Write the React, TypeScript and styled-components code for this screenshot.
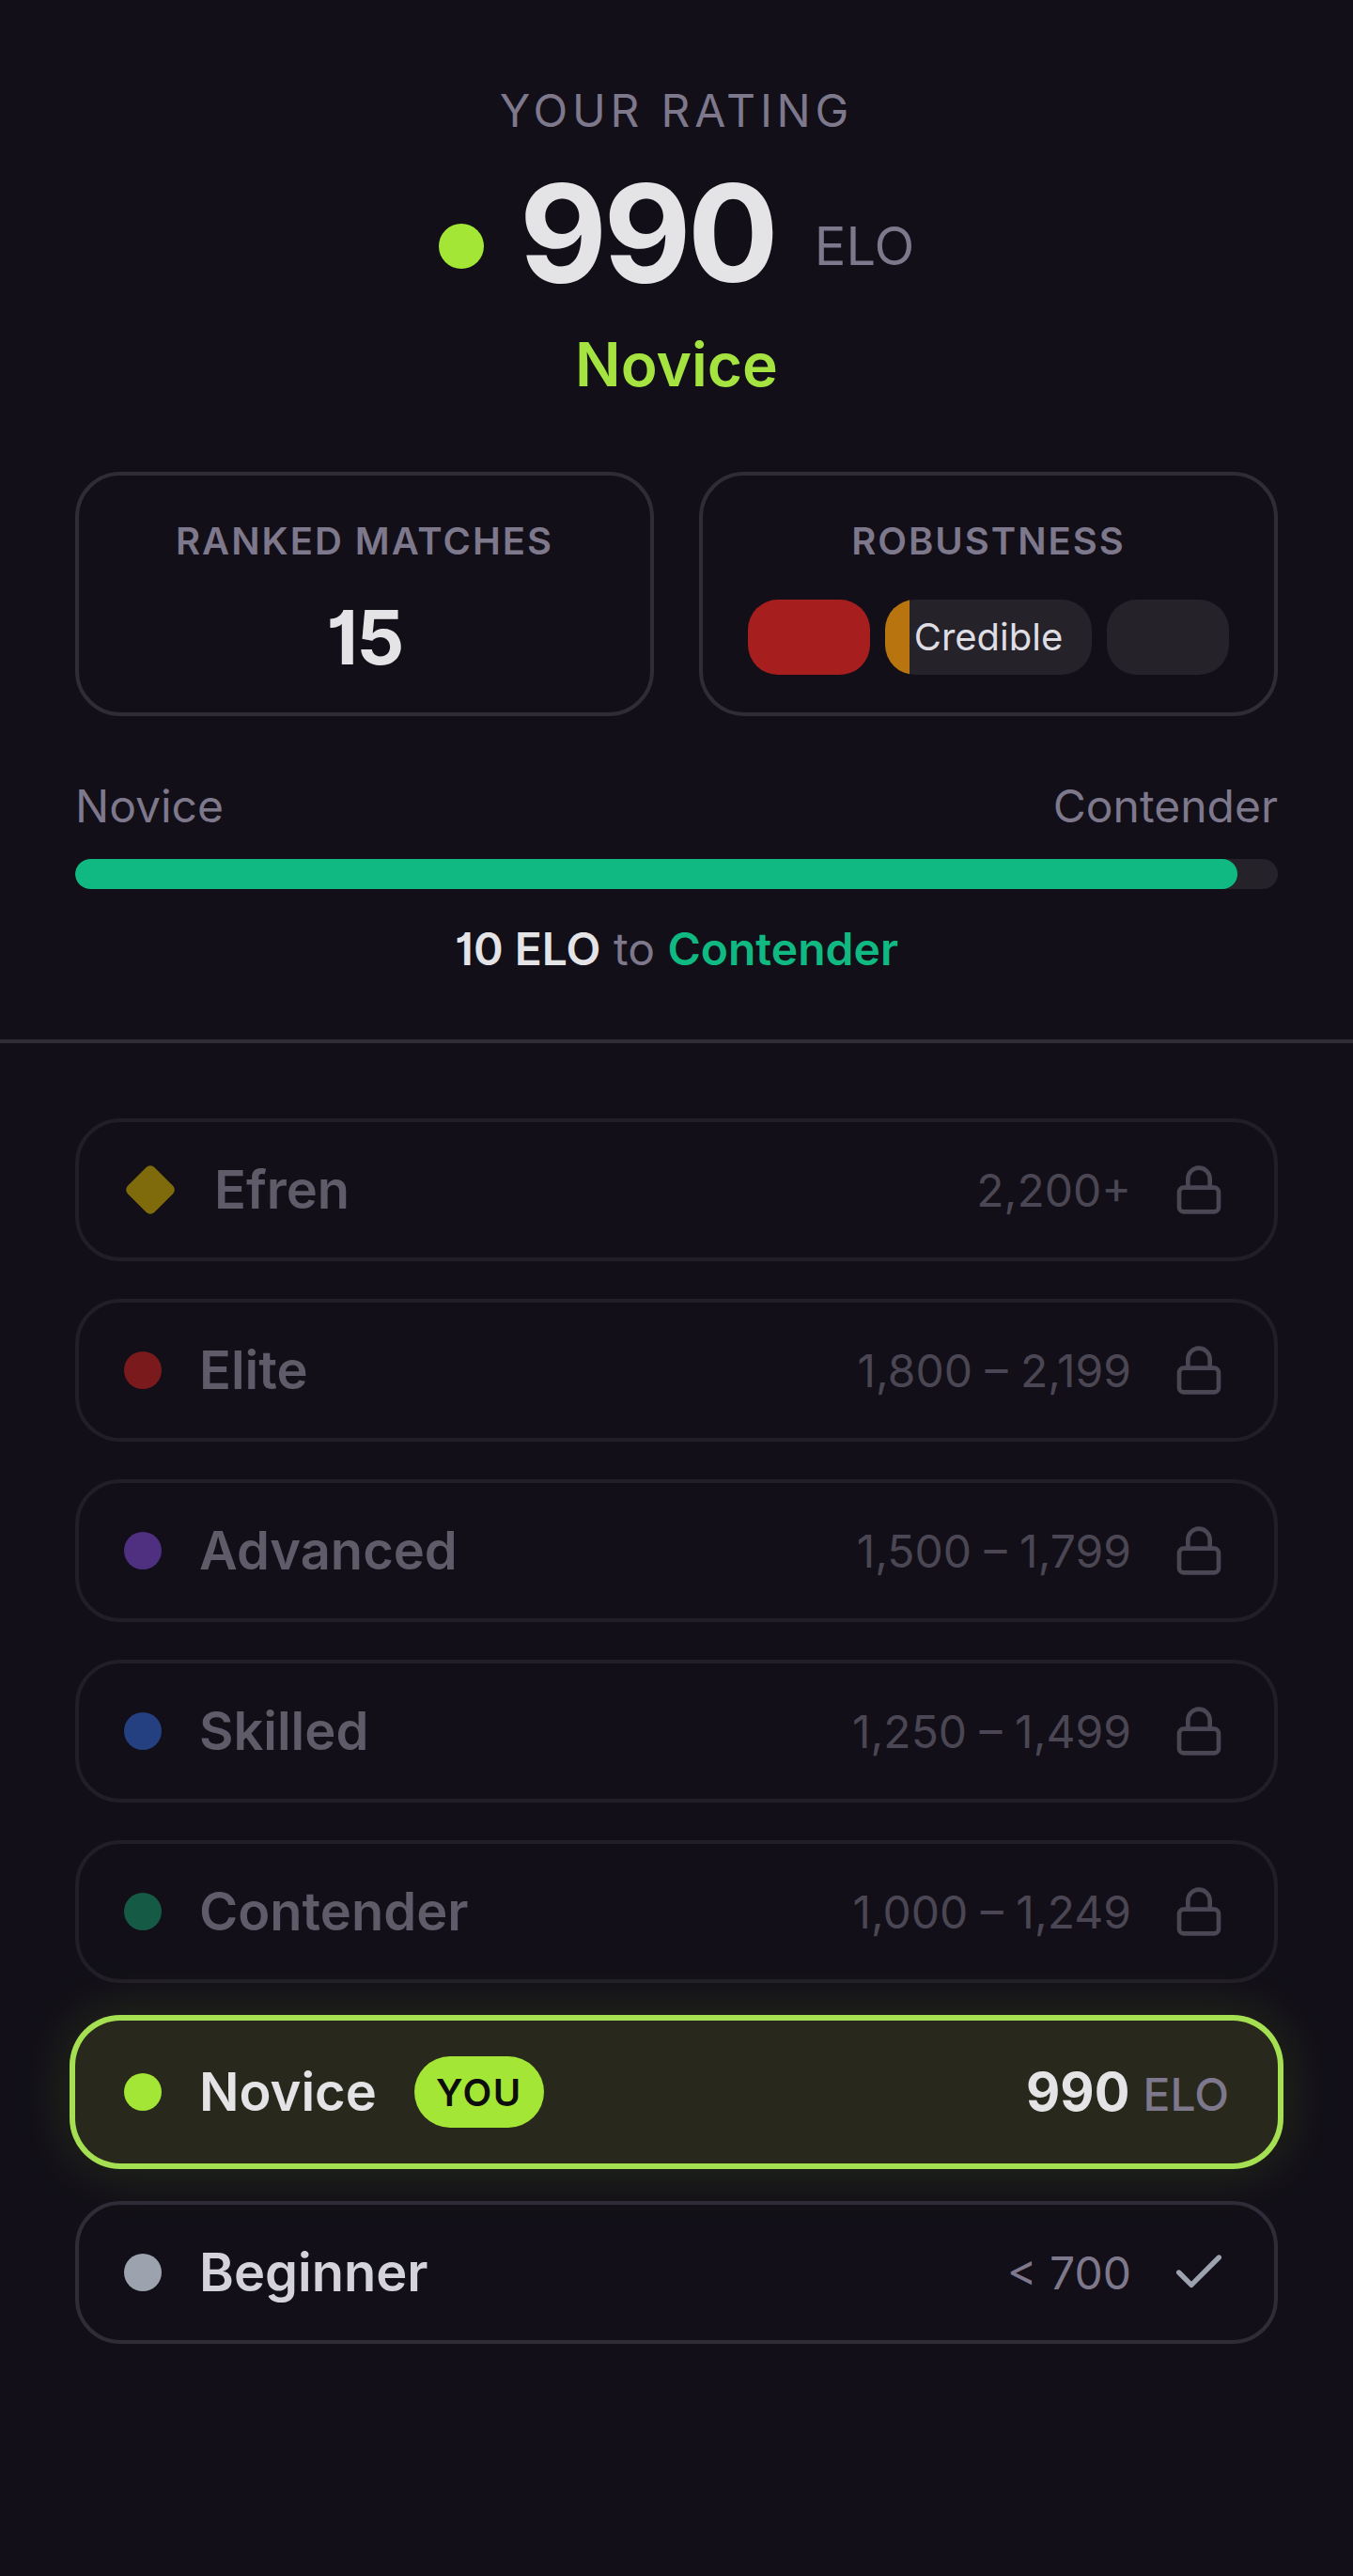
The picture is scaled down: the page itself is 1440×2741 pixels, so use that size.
import { createGlobalStyle, styled } from 'styled-components';
import { Check, Lock } from 'lucide-react';

const GlobalStyle = createGlobalStyle`
  * { box-sizing: border-box; }
  html, body { margin: 0; background: #120f18; }
  body { font-family: Inter, "Liberation Sans", sans-serif; color: #e4e4e7; }
`;

const Page = styled.div`
  min-height: 2741px;
  background: #120f18;
`;

const Summary = styled.section`
  padding: 86px 80px 0;
`;

const Eyebrow = styled.div`
  font-size: 48px;
  line-height: 64px;
  letter-spacing: 4.8px;
  color: #7e788c;
  text-align: center;
`;

const RatingRow = styled.div`
  display: flex;
  align-items: center;
  justify-content: center;
  margin-top: 40px;
  height: 144px;
`;

const RatingDot = styled.span`
  width: 48px;
  height: 48px;
  border-radius: 50%;
  background: #a3e635;
  margin-right: 38px;
`;

const RatingValue = styled.span`
  margin-right: 42px;
  margin-bottom: 28px;
  font-size: 144px;
  line-height: 1;
  font-weight: 700;
  letter-spacing: -4px;
`;

const RatingUnit = styled.span`
  font-size: 56px;
  color: #7e788c;
`;

const TierName = styled.div`
  margin-top: 14px;
  font-size: 64px;
  line-height: 80px;
  font-weight: 600;
  color: #a4e340;
  text-align: center;
`;

const Stats = styled.div`
  display: grid;
  grid-template-columns: 1fr 1fr;
  gap: 48px;
  margin-top: 74px;
`;

const StatCard = styled.div`
  height: 260px;
  padding: 42px 48px 40px;
  border: 4px solid #2f2b37;
  border-radius: 48px;
  text-align: center;
`;

const StatLabel = styled.div`
  font-size: 40px;
  line-height: 56px;
  font-weight: 600;
  letter-spacing: 2px;
  color: #7e788c;
  margin-bottom: 34px;
`;

const StatValue = styled.div`
  font-size: 80px;
  line-height: 80px;
  font-weight: 700;
  letter-spacing: -1.6px;
  font-feature-settings: 'cv01';
`;

const Pills = styled.div`
  display: flex;
  gap: 16px;
`;

const Pill = styled.div<{ $tone: string; $wide?: boolean }>`
  position: relative;
  overflow: hidden;
  flex: ${p => (p.$wide ? '0 0 220px' : '0 0 130px')};
  height: 80px;
  border-radius: 32px;
  background: ${p => p.$tone};
  font-size: 40px;
  line-height: 80px;
  color: #dedde3;
`;

const PillFill = styled.span`
  position: absolute;
  left: 0;
  top: 0;
  bottom: 0;
  background: #b8740f;
`;

const PillText = styled.span`
  position: relative;
`;

const Progress = styled.div`
  margin-top: 64px;
`;

const ProgressLabels = styled.div`
  display: flex;
  justify-content: space-between;
  font-size: 48px;
  line-height: 64px;
  color: #7e788c;
`;

const Track = styled.div`
  height: 32px;
  margin-top: 24px;
  border-radius: 16px;
  background: #25222a;
  overflow: hidden;
`;

const TrackFill = styled.div`
  height: 100%;
  border-radius: 16px;
  background: #10b981;
`;

const Remaining = styled.div`
  margin-top: 32px;
  font-size: 48px;
  line-height: 64px;
  text-align: center;
  color: #7e788c;

  strong {
    font-weight: 600;
    color: #e4e4e7;
    font-feature-settings: 'cv01';
  }

  em {
    font-style: normal;
    font-weight: 600;
    color: #10b981;
  }
`;

const Divider = styled.hr`
  margin: 64px 0 0;
  border: 0;
  height: 4px;
  background: #2f2b37;
`;

const TierList = styled.div`
  display: flex;
  flex-direction: column;
  gap: 40px;
  padding: 80px 80px 0;
`;

const Row = styled.div<{ $state: 'locked' | 'current' | 'passed' }>`
  display: flex;
  align-items: center;
  height: 152px;
  padding: 0 48px;
  border-radius: 48px;
  border: 4px solid ${p => (p.$state === 'locked' ? '#211e28' : p.$state === 'passed' ? '#2f2b37' : 'transparent')};
  ${p =>
    p.$state === 'current' &&
    `
    background: #28291c;
    box-shadow: 0 0 0 6px #a5e052, 0 0 64px 8px rgba(163, 230, 53, 0.14);
  `}
`;

const Dot = styled.span<{ $color: string }>`
  flex: none;
  width: 40px;
  height: 40px;
  border-radius: 50%;
  background: ${p => p.$color};
`;

const DiamondBox = styled.span`
  flex: none;
  display: flex;
  align-items: center;
  justify-content: center;
  width: 56px;
  height: 56px;
`;

const Diamond = styled.span<{ $color: string }>`
  width: 40px;
  height: 40px;
  border-radius: 6px;
  background: ${p => p.$color};
  transform: rotate(45deg);
`;

const TierTitle = styled.span<{ $color: string }>`
  margin-left: 40px;
  font-size: 56px;
  line-height: 72px;
  font-weight: 600;
  color: ${p => p.$color};
`;

const YouBadge = styled.span`
  display: flex;
  align-items: center;
  justify-content: center;
  height: 76px;
  width: 138px;
  margin-left: 40px;
  border-radius: 38px;
  background: #a3e635;
  color: #0d0d0d;
  font-size: 40px;
  font-weight: 600;
  letter-spacing: 1.6px;
`;

const Range = styled.span<{ $color: string }>`
  margin-left: auto;
  font-size: 48px;
  color: ${p => p.$color};
`;

const RowIcon = styled.span<{ $color: string }>`
  flex: none;
  display: flex;
  align-items: center;
  justify-content: center;
  width: 64px;
  margin-left: 40px;
  color: ${p => p.$color};
`;

const CurrentElo = styled.span`
  margin-left: auto;
  font-size: 56px;
  font-weight: 700;
  color: #e4e4e7;

  small {
    margin-left: 14px;
    font-size: 48px;
    font-weight: 500;
    color: #7e788c;
  }
`;

const lockedTiers = [
  { name: 'Elite', range: '1,800 – 2,199', color: '#7b1a1c' },
  { name: 'Advanced', range: '1,500 – 1,799', color: '#4f3080' },
  { name: 'Skilled', range: '1,250 – 1,499', color: '#244080' },
  { name: 'Contender', range: '1,000 – 1,249', color: '#155a45' },
];

export default function App() {
  return (
    <Page>
      <GlobalStyle />
      <Summary>
        <Eyebrow>YOUR RATING</Eyebrow>
        <RatingRow>
          <RatingDot />
          <RatingValue>990</RatingValue>
          <RatingUnit>ELO</RatingUnit>
        </RatingRow>
        <TierName>Novice</TierName>

        <Stats>
          <StatCard>
            <StatLabel>RANKED MATCHES</StatLabel>
            <StatValue>15</StatValue>
          </StatCard>
          <StatCard>
            <StatLabel>ROBUSTNESS</StatLabel>
            <Pills>
              <Pill $tone="#a61e1e" />
              <Pill $tone="#25222a" $wide>
                <PillFill style={{ width: '26px' }} />
                <PillText>Credible</PillText>
              </Pill>
              <Pill $tone="#25222a" />
            </Pills>
          </StatCard>
        </Stats>

        <Progress>
          <ProgressLabels>
            <span>Novice</span>
            <span>Contender</span>
          </ProgressLabels>
          <Track>
            <TrackFill style={{ width: `${((990 - 700) / 300) * 100}%` }} />
          </Track>
          <Remaining>
            <strong>10 ELO</strong> to <em>Contender</em>
          </Remaining>
        </Progress>
      </Summary>

      <Divider />

      <TierList>
        <Row $state="locked">
          <DiamondBox>
            <Diamond $color="#7f6a0c" />
          </DiamondBox>
          <TierTitle $color="#5f5b69">Efren</TierTitle>
          <Range $color="#4a4653">2,200+</Range>
          <RowIcon $color="#4a4653">
            <Lock size={56} strokeWidth={2} />
          </RowIcon>
        </Row>
        {lockedTiers.map(t => (
          <Row $state="locked" key={t.name}>
            <Dot $color={t.color} />
            <TierTitle $color="#5f5b69">{t.name}</TierTitle>
            <Range $color="#4a4653">{t.range}</Range>
            <RowIcon $color="#4a4653">
              <Lock size={56} strokeWidth={2} />
            </RowIcon>
          </Row>
        ))}
        <Row $state="current">
          <Dot $color="#a3e635" />
          <TierTitle $color="#e4e4e7">Novice</TierTitle>
          <YouBadge>YOU</YouBadge>
          <CurrentElo>
            990<small>ELO</small>
          </CurrentElo>
        </Row>
        <Row $state="passed">
          <Dot $color="#9ca3af" />
          <TierTitle $color="#d4d3dc">Beginner</TierTitle>
          <Range $color="#7e788c">&lt; 700</Range>
          <RowIcon $color="#9ca3af">
            <Check size={64} strokeWidth={2} />
          </RowIcon>
        </Row>
      </TierList>
    </Page>
  );
}
